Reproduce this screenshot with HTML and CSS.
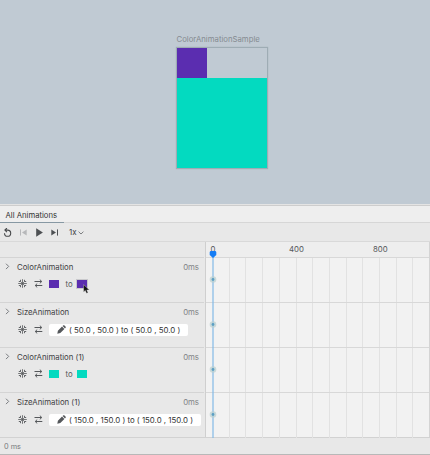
FILE: index.html
```html
<!DOCTYPE html>
<html lang="en">
<head>
<meta charset="utf-8">
<title>All Animations</title>
<link rel="stylesheet" href="styles.css">
</head>
<body>
<svg class="defs" aria-hidden="true">
  <symbol id="freeze" viewBox="0 0 9 9"><path d="M4.500.2v8.600M.2 4.500h8.600" fill="none" stroke="currentColor" stroke-width=".8"/><path d="M2.500.8v1.700H.8M6.500.8v1.700h1.700M2.500 8.200V6.500H.8M6.500 8.200V6.500h1.700M2.500 2.500l1.300 1.300M6.500 2.500 5.200 3.800M2.500 6.500l1.300-1.300M6.500 6.500 5.200 5.200" fill="none" stroke="currentColor" stroke-width=".9"/></symbol>
  <symbol id="swap" viewBox="0 0 9 9"><path d="M.5 2.500h7M5.800.6l2 1.900-2 1.900M8.300 6.500h-7M3.200 4.600l-2 1.900 2 1.900" fill="none" stroke="currentColor" stroke-width="1"/></symbol>
  <symbol id="chevron" viewBox="0 0 5 8"><path d="M1 .7l2.700 2.700L1 6.100" fill="none" stroke="currentColor" stroke-width="1"/></symbol>
  <symbol id="pencil" viewBox="0 0 9 9"><path d="M.3 8.700l.6-3 4.100-4.100 2.400 2.400-4.100 4.100zM5.600 1l.8-.7q.4-.3.8 0l1.500 1.500q.4.400 0 .8l-.7.800z" fill="currentColor"/></symbol>
</svg>
<div class="app">
  <section class="canvas">
    <div class="preview">
      <div class="preview-title">ColorAnimationSample</div>
      <div class="frame"><div class="small-box"></div><div class="large-box"></div></div>
    </div>
  </section>
  <nav class="tabs"><div class="tab">All Animations</div></nav>
  <div class="toolbar">
    <svg class="reset" viewBox="0 0 9 9"><path d="M2 2.1h2.6a3.1 3.1 0 1 1-3.1 3.1M3.9.1l-2 2 2 2" fill="none" stroke="#484a4c" stroke-width="1.1"/></svg>
    <svg class="skip" viewBox="0 0 7 7"><path d="M.5.4v6.2" stroke="#b7b8ba"/><path d="M6.7.5v6L2 3.5z" fill="#b7b8ba"/></svg>
    <svg class="play" viewBox="0 0 7 9"><path d="M.2.2v8.6L6.9 4.5z" fill="#4d5053"/></svg>
    <svg class="skip next" viewBox="0 0 7 7"><path d="M6.5.4v6.2" stroke="#4d5053"/><path d="M.3.5v6L5 3.5z" fill="#4d5053"/></svg>
    <span class="speed">1x</span>
    <svg class="down" viewBox="0 0 6 4"><path d="M.6.7 3 3 5.4.7" fill="none" stroke="#6e7073" stroke-width=".9"/></svg>
  </div>
  <main class="panel">
    <div class="list">
      <div class="list-head"></div>
      <div class="row">
        <svg class="chev"><use href="#chevron"/></svg>
        <div class="body">
          <div class="title"><span>ColorAnimation</span><span class="ms">0ms</span></div>
          <div class="controls"><svg class="freeze"><use href="#freeze"/></svg><svg class="swap"><use href="#swap"/></svg><i class="swatch purple"></i><span class="to">to</span><i class="swatch purple hovered"><svg class="cursor" viewBox="0 0 7 10"><path d="M.6.6v7.3l1.7-1.5 1.2 2.9 1.5-.6-1.2-2.8h2.5z" fill="#111" stroke="#ddd" stroke-width=".4"/></svg></i></div>
        </div>
      </div>
      <div class="row">
        <svg class="chev"><use href="#chevron"/></svg>
        <div class="body">
          <div class="title"><span>SizeAnimation</span><span class="ms">0ms</span></div>
          <div class="controls"><svg class="freeze"><use href="#freeze"/></svg><svg class="swap"><use href="#swap"/></svg><div class="value short"><svg class="pencil"><use href="#pencil"/></svg><span>( 50.0 , 50.0 ) to ( 50.0 , 50.0 )</span></div></div>
        </div>
      </div>
      <div class="row">
        <svg class="chev"><use href="#chevron"/></svg>
        <div class="body">
          <div class="title"><span>ColorAnimation (1)</span><span class="ms">0ms</span></div>
          <div class="controls"><svg class="freeze"><use href="#freeze"/></svg><svg class="swap"><use href="#swap"/></svg><i class="swatch teal"></i><span class="to">to</span><i class="swatch teal"></i></div>
        </div>
      </div>
      <div class="row">
        <svg class="chev"><use href="#chevron"/></svg>
        <div class="body">
          <div class="title"><span>SizeAnimation (1)</span><span class="ms">0ms</span></div>
          <div class="controls"><svg class="freeze"><use href="#freeze"/></svg><svg class="swap"><use href="#swap"/></svg><div class="value long"><svg class="pencil"><use href="#pencil"/></svg><span>( 150.0 , 150.0 ) to ( 150.0 , 150.0 )</span></div></div>
        </div>
      </div>
    </div>
    <div class="timeline">
      <div class="ruler"><span>0</span><span>400</span><span>800</span></div>
      <div class="track"></div>
      <div class="track"></div>
      <div class="track"></div>
      <div class="track"></div>
      <svg class="playhead" viewBox="0 0 8 188"><path d="M4 7v181" stroke="#82b9e6" stroke-width="1.2"/><g fill="#b9cfcf" fill-opacity=".7"><circle cx="4" cy="29.500" r="3.300"/><circle cx="4" cy="74.500" r="3.300"/><circle cx="4" cy="119.500" r="3.300"/><circle cx="4" cy="164.500" r="3.300"/></g><g fill="#5b9fc4"><circle cx="4" cy="29.500" r="1.400"/><circle cx="4" cy="74.500" r="1.400"/><circle cx="4" cy="119.500" r="1.400"/><circle cx="4" cy="164.500" r="1.400"/></g><path d="M1.500.900h5l.8 1v3.200L4 8 .7 5.100v-3.200z" fill="#147df5"/></svg>
    </div>
  </main>
  <footer class="status">0 ms</footer>
</div>
</body>
</html>
```
FILE: styles.css
```css
* { box-sizing: border-box; }
body { margin: 0; font-family: Inter, "Liberation Sans", sans-serif; font-size: 8px; color: #3e4043; }
svg { display: block; flex: none; }
.defs { position: absolute; width: 0; height: 0; }
.app { width: 430px; height: 455px; display: flex; flex-direction: column; background: #e8e8e8; overflow: hidden; border-bottom: 1px solid #b8b8b8; }
.canvas { height: 204px; flex: none; background: #c0cad3; padding: 34px 0 0 176px; }
.preview { width: 92px; }
.preview-title { height: 13px; line-height: 11px; font-size: 7.750px; color: #858b91; white-space: nowrap; padding-left: 0.500px; }
.frame { height: 122px; border: 1px solid #9eacb4; box-shadow: 0 0 1px #9eacb4; }
.small-box { width: 30px; height: 30px; background: #5b2db0; }
.large-box { height: 90px; background: #03dac0; }
.tabs { height: 19px; flex: none; display: flex; border-top: 1px solid #e4e4e4; background: linear-gradient(#cdcdcd 1px, #eee 1px); border-bottom: 1px solid #d6d6d6; }
.tab { width: 64px; padding: 5px 0 0 5.500px; line-height: 11px; font-size: 7.700px; height: 18px; border-bottom: 1px solid #8798a3; white-space: nowrap; color: #333; }
.toolbar { height: 19px; flex: none; display: flex; align-items: center; padding-left: 3px; border-bottom: 1px solid #d9d9d9; }
.reset { width: 9px; height: 9px; }
.skip { width: 7px; height: 7px; margin-left: 8px; }
.play { width: 7px; height: 9px; margin-left: 9px; }
.next { margin-left: 8px; }
.speed { margin-left: 11px; width: 9px; font-size: 8px; }
.down { width: 6px; height: 4px; margin-top: 2px; }
.panel { height: 196px; flex: none; display: flex; border-bottom: 1px solid #d2d2d2; }
.list { width: 206px; border-right: 1px solid #cfcfcf; }
.list-head { height: 16px; border-bottom: 1px solid #d4d4d4; margin-right: 1px; }
.row { height: 45px; display: flex; padding: 4px 5px 0 5px; margin-right: 1px; border-bottom: 1px solid #d4d4d4; }
.row:last-child { border: 0; }
.chev { width: 5px; height: 8px; color: #777a7e; margin: 1px 7px 0 0; }
.body { flex: 1; min-width: 0; }
.title { display: flex; justify-content: space-between; height: 11px; line-height: 11px; font-size: 7.800px; white-space: nowrap; }
.ms { color: #818386; }
.controls { display: flex; align-items: center; height: 13px; margin-top: 4px; padding-left: 1px; color: #55585b; }
.row:nth-child(odd) .controls { margin-top: 5px; }
.freeze { width: 9px; height: 9px; margin-right: 1px; }
.swap { width: 9px; height: 9px; margin-left: 6px; }
.swatch { width: 10px; height: 8px; margin-left: 6px; position: relative; }
.purple { background: #5b2db0; }
.teal { background: #03dac0; }
.to { width: 8px; margin-left: 6.500px; font-size: 7.800px; line-height: 11px; padding-top: 2px; }
.to + .swatch { margin-left: 3.500px; }
.hovered { box-shadow: 0 0 0 1px #c9c9cc; }
.cursor { position: absolute; left: 6px; top: 4px; width: 7px; height: 10px; }
.value { display: flex; align-items: center; height: 12px; background: #fff; border-radius: 2px; margin-left: 5.500px; padding-left: 8px; font-size: 7.850px; line-height: 12px; white-space: nowrap; color: #333; }
.value.short { width: 139px; }
.value.long { width: 152px; flex: none; }
.pencil { width: 9px; height: 9px; margin-right: 3.500px; color: #55585b; }
.timeline { flex: 1; position: relative; border-right: 1px solid #d4d4d4; background: #f2f2f2; }
.ruler { height: 16px; background: #eee; border-bottom: 1px solid #d8d8d8; display: grid; grid-template-columns: 14px 153px 14px; font-size: 7.800px; line-height: 15px; text-align: center; color: #55585b; }
.track { height: 45px; border-bottom: 1px solid #d8d8d8; background: repeating-linear-gradient(90deg, transparent 0 15.700px, #e2e2e2 15.700px 16.700px) 7px 0 no-repeat; }
.track:nth-last-child(2) { border: 0; }
.playhead { position: absolute; left: 3px; top: 8px; width: 8px; height: 188px; }
.status { flex: 1; padding-left: 4px; line-height: 18px; font-size: 7.300px; color: #77797c; }
```
